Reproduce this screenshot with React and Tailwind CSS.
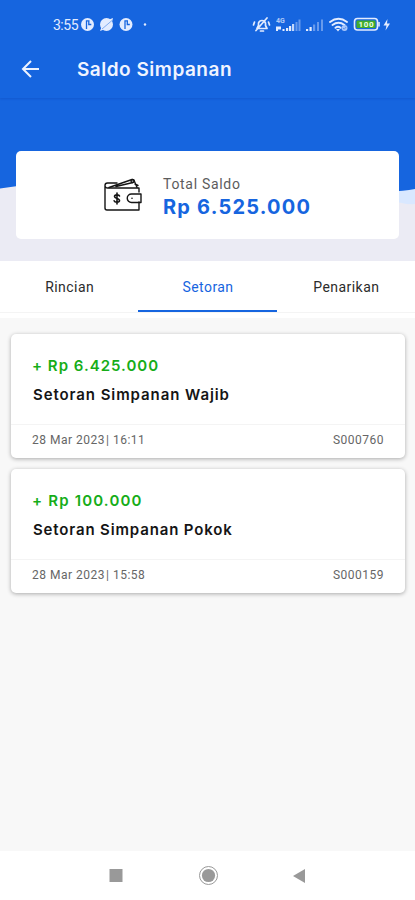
import React from "react";

const transactions = [
  { amount: "+ Rp 6.425.000", title: "Setoran Simpanan Wajib", date: "28 Mar 2023", time: "16:11", code: "S000760", amountTracking: "tracking-[1px]", titleTracking: "tracking-[0.92px]" },
  { amount: "+ Rp 100.000", title: "Setoran Simpanan Pokok", date: "28 Mar 2023", time: "15:58", code: "S000159", amountTracking: "tracking-[1.17px]", titleTracking: "tracking-[0.85px]" },
];

function StatusBar() {
  return (
    <div className="flex h-[49px] items-center pl-[53px] pr-[23px] text-[#e3ecff]">
      <span className="font-['Roboto',sans-serif] text-[14px] leading-4 tracking-[-0.5px]">3:55</span>
      <svg className="ml-[3px] shrink-0" width="68" height="16" viewBox="0 0 68 16">
        <g fill="#e3ecff">
          <circle cx="6.500" cy="7.500" r="6.500" />
          <circle cx="25.500" cy="7.500" r="6.500" />
          <circle cx="45" cy="7.500" r="6.500" />
          <circle cx="64" cy="7.500" r="1.200" />
          <path d="M19 14l4-1.500-2.500-2.500zM32 1l-4 1.500 3 2.500z" />
        </g>
        <g stroke="#1665df" fill="none" strokeWidth="1.300">
          <path d="M5.500 12V3.800H8.500M7.800 4v3.500h2.500" />
          <path d="M44 12V3.800H47M46.300 4v3.500h2.500" />
          <path d="M21 12L31 3.500" strokeWidth="0.800" opacity="0.6" />
        </g>
      </svg>
      <svg className="ml-auto shrink-0" width="140" height="18" viewBox="0 0 140 18">
        <g stroke="#e3ecff" fill="none" strokeWidth="1.700" strokeLinecap="round" strokeLinejoin="round">
          <path d="M5 12.500h10l-1.500-3V7a3.700 3.700 0 0 0-7 0v2.500zM8.500 15h3M15 2L4 14.500M2.500 6l-1 3M16.500 6l1 3" />
        </g>
        <g fill="#e3ecff">
          <text x="24" y="7" fontSize="7" fontWeight="700" fontFamily="Roboto, sans-serif" opacity="0.75">4G</text>
          <path d="M24 10.500h5v3h-3V15h-2zM30.500 13h2v2h-2zM34 12h2.200v3H34zM37 10h2.200v5H37z" />
          <path d="M40 8h2.200v7H40z" opacity="0.85" />
          <path d="M43.500 6h2v9h-2zM46.500 3.500h2V15h-2z" opacity="0.4" />
          <path d="M54 13h2.200v2H54zM57.500 11h2.200v4h-2.200z" />
          <path d="M61 8.500h2.200V15H61zM65 6h2v9h-2zM69 3.500h2V15h-2z" opacity="0.4" />
        </g>
        <g stroke="#e3ecff" fill="none" strokeWidth="1.900" strokeLinecap="round">
          <path d="M78 6q8.500-6.500 17 0M80.500 9q6-4.500 12 0M83.500 11.800q2.500-2 5 0" />
        </g>
        <path d="M84 13h4l-2 2.500z" fill="#e3ecff" />
        <circle cx="92.500" cy="12" r="3" fill="#a6c5fb" />
        <path d="M91 12l1.200 1.200 2-2.200" stroke="#5c91ec" fill="none" />
        <rect x="102.500" y="2.500" width="23" height="11.500" rx="3" fill="none" stroke="#e3ecff" strokeWidth="1.600" />
        <rect x="104.500" y="4.500" width="19" height="7.500" rx="1" fill="#42ad2b" />
        <path d="M127 6v4.500" stroke="#e3ecff" strokeWidth="1.600" />
        <text x="106.500" y="11.200" fontSize="8" fontWeight="700" fontFamily="Roboto, sans-serif" fill="#edffe8" textLength="15">100</text>
        <path d="M135.500 3l-4 6.500h3l-1 5 4.500-7h-3z" fill="#e3ecff" />
      </svg>
    </div>
  );
}

function WalletIcon() {
  return (
    <svg width="38" height="34" viewBox="0 0 38 34" fill="none" stroke="#151515" strokeWidth="1.400" strokeLinejoin="round" strokeLinecap="round">
      <path d="M35 14V10H3.500A2.500 2.500 0 0 1 3.500 5H13M1 7.500V30a2 2 0 0 0 2 2h32v-8" />
      <path d="M5 9.500L28 1.500l2 .7 3 7.300M12 8.500l17-4M31 6l3 1.500" />
      <circle cx="28.500" cy="3" r="1.500" />
      <path d="M35 16h2v8.500h-9.500a4.250 4.250 0 0 1 0-8.500z" />
      <circle cx="28" cy="20.200" r="0.800" fill="#151515" stroke="none" />
      <path d="M15.500 18c-.5-1.600-5-1.600-5 .6 0 2.600 5 1.200 5 4 0 2.200-4.700 2.300-5.400.2M13 15v11" strokeWidth="1.600" />
    </svg>
  );
}

function TransactionCard({ item }) {
  return (
    <article className="flex h-[124px] flex-col rounded-[5px] bg-white shadow-[0_1px_4px_rgba(0,0,0,0.32)]">
      <div className="h-[91px] border-b border-[#f4f4f4] px-[22px] pt-[21px]">
        <div className={`-ml-px whitespace-nowrap font-['Inter',sans-serif] text-[15px] font-semibold leading-[22px] text-[#16ad18] ${item.amountTracking}`}>{item.amount}</div>
        <h2 className={`mt-[7px] whitespace-nowrap font-['Inter',sans-serif] text-[15px] font-semibold leading-[22px] text-[#151515] ${item.titleTracking}`}>{item.title}</h2>
      </div>
      <div className="flex h-[29px] items-center justify-between pl-[21px] pr-[21px] font-['Roboto',sans-serif] text-[12px] tracking-[0.5px] text-[#666]">
        <span>{item.date}<span className="ml-px">|</span> {item.time}</span>
        <span>{item.code}</span>
      </div>
    </article>
  );
}

export default function App() {
  return (
    <div className="flex h-[900px] w-[415px] flex-col overflow-hidden bg-[#f8f8f8] font-['Roboto',sans-serif]">
      <header className="z-10 h-[98px] shrink-0 bg-[#1665df] shadow-[0_1px_2px_rgba(0,40,140,0.2)]">
        <StatusBar />
        <div className="flex h-10 items-center pl-[21px]">
          <svg width="20" height="20" viewBox="0 0 20 20" fill="none" stroke="#edf3ff" strokeWidth="2">
            <path d="M18 10H2M10 2L2 10l8 8" />
          </svg>
          <h1 className="ml-9 whitespace-nowrap pt-[2px] font-['Inter',sans-serif] text-[19px] font-semibold leading-6 tracking-[0.5px] text-[#f0f4ff]">Saldo Simpanan</h1>
        </div>
      </header>
      <section className="relative h-[163px] shrink-0 bg-[#ebebf4] px-4 pt-[53px]">
        <svg className="absolute inset-0" width="415" height="163" viewBox="0 0 415 163">
          <path d="M300 70H415V106Q405 107 390 102z" fill="#d9e8ff" />
          <path d="M0 0H415V91Q390 96 345 90L60 82Q25 87 0 90.500z" fill="#1665df" />
        </svg>
        <div className="relative flex h-[88px] w-[383px] items-center rounded-[5px] bg-white pl-[88px]">
          <WalletIcon />
          <div className="ml-[21px] pt-[4px]">
            <div className="text-[14px] leading-[18px] tracking-[0.7px] text-[#5c5c5c]">Total Saldo</div>
            <div className="mt-px whitespace-nowrap font-['Inter',sans-serif] text-[20px] font-bold leading-[26px] tracking-[1.2px] text-[#1665df]">Rp 6.525.000</div>
          </div>
        </div>
      </section>
      <nav className="h-[57px] shrink-0 bg-white">
        <div className="grid h-[52px] grid-cols-3 border-b border-[#f4f4f4] text-[14px] tracking-[0.45px]">
          <button className="pl-px pt-px text-[#2b2b2b]">Rincian</button>
          <button className="border-b-2 border-[#1665df] pl-px pt-[3px] text-[#1665df]">Setoran</button>
          <button className="pl-px pt-px text-[#2b2b2b]">Penarikan</button>
        </div>
      </nav>
      <main className="flex grow flex-col gap-[11px] pl-[11px] pr-[10px] pt-4">
        {transactions.map((item) => <TransactionCard key={item.code} item={item} />)}
      </main>
      <footer className="flex h-[49px] shrink-0 items-center justify-center bg-white">
        <svg width="200" height="24" viewBox="0 0 200 24" fill="#999">
          <path d="M1.500 5h13v13h-13z" />
          <circle cx="100.500" cy="11.500" r="6.600" />
          <circle cx="100.500" cy="11.500" r="9" fill="none" stroke="#999" />
          <path d="M197 5v14l-12-7z" />
        </svg>
      </footer>
    </div>
  );
}
